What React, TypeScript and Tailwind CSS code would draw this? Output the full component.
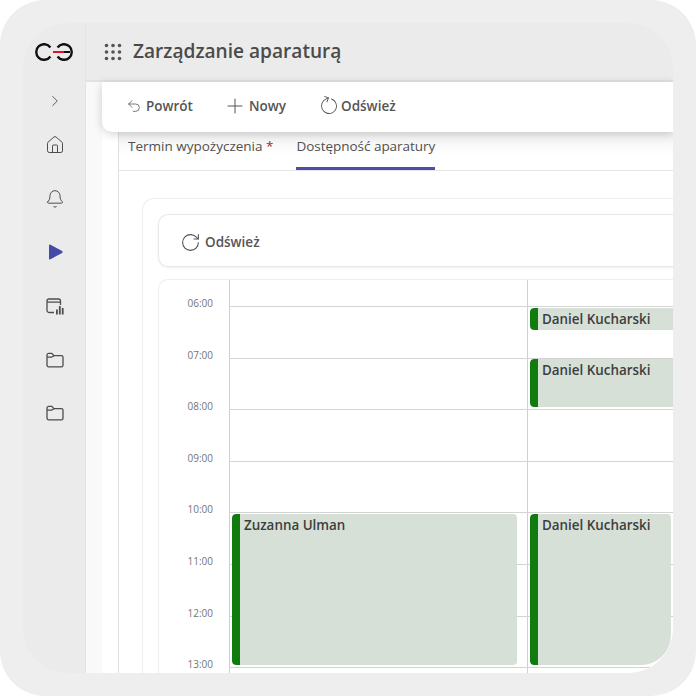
import { Bell, ChevronRight, House, Plus, RotateCcw, RotateCw, Undo2 } from "lucide-react";

const hours = ["06:00", "07:00", "08:00", "09:00", "10:00", "11:00", "12:00", "13:00"];

function Logo() {
  return (
    <svg className="-ml-[2px]" width="38" height="18" viewBox="0 0 38 18" fill="none">
      <path d="M15.4 4.5A7.8 7.8 0 1 0 15.4 13.5" stroke="#111" strokeWidth="2.4" />
      <path d="M22.6 4.5A7.8 7.8 0 1 1 22.6 13.5" stroke="#111" strokeWidth="2.4" />
      <path d="M18 9h11" stroke="#e0102f" strokeWidth="2.2" />
      <path d="M29 9h6" stroke="#111" strokeWidth="2.2" />
    </svg>
  );
}

function Dots() {
  return (
    <svg width="18" height="18" viewBox="0 0 18 18" fill="#555">
      {[2.5, 9, 15.5].map((y) =>
        [2.5, 9, 15.5].map((x) => <circle key={`${x}-${y}`} cx={x} cy={y} r="1.8" />),
      )}
    </svg>
  );
}

function FolderIcon() {
  return (
    <svg width="18" height="16" viewBox="0 0 18 16" fill="none" stroke="#4d4d4d" strokeWidth="1.3">
      <path d="M1 3a1.6 1.6 0 0 1 1.6-1.6h3.2L8 3.6h7.4A1.6 1.6 0 0 1 17 5.2v8a1.6 1.6 0 0 1-1.6 1.6H2.6A1.6 1.6 0 0 1 1 13.2z" />
      <path d="M1 5.2h4.6L8 3.6" />
    </svg>
  );
}

function ReportIcon() {
  return (
    <svg width="18" height="18" viewBox="0 0 18 18" fill="none">
      <path d="M8 14.5H3a2 2 0 0 1-2-2V3a2 2 0 0 1 2-2h9.5a2 2 0 0 1 2 2v4M1 4.2h13.5" stroke="#4d4d4d" strokeWidth="1.3" />
      <path d="M10 11.5h1.8v5H10zM12.9 8h1.8v8.5h-1.8zM15.8 10h1.8v6.5h-1.8z" fill="#4d4d4d" />
    </svg>
  );
}

function ToolbarButton({ icon, label, className }: { icon: React.ReactNode; label: string; className: string }) {
  return (
    <button className={`flex items-center text-[13.5px] font-semibold text-[#555] ${className}`} type="button">
      {icon}
      {label}
    </button>
  );
}

function CalendarEvent({ name, className }: { name: string; className: string }) {
  return (
    <div className={`absolute flex overflow-hidden rounded-[4px] bg-[#d7e0d7] ${className}`}>
      <div className="w-2 shrink-0 rounded-l-[4px] bg-[#107c10]" />
      <span className="pl-[4px] pt-[1px] text-[13.4px] leading-[20px] font-[550] text-[#3d3d3d]">{name}</span>
    </div>
  );
}

export default function App() {
  return (
    <div className="h-[696px] w-[696px] bg-white font-['Open_Sans',sans-serif]">
      <div className="h-full rounded-[45px] bg-[#eeeeee] p-[23px]">
        <div className="flex h-[650px] w-[650px] overflow-hidden rounded-[45px] bg-[#ebebeb]">
          <aside className="flex w-[63px] shrink-0 flex-col items-center border-r border-[#e4e4e4] pl-[1px] pt-[17px]">
            <div className="flex h-[24px] items-center">
              <Logo />
            </div>
            <ChevronRight className="mt-[28px]" size={18} strokeWidth={1.2} color="#4d4d4d" />
            <House className="mt-[25px]" size={20} strokeWidth={1.2} color="#4d4d4d" />
            <Bell className="mt-[34px]" size={20} strokeWidth={1.2} color="#4d4d4d" />
            <svg className="ml-[2px] mt-[35px]" width="15" height="16" viewBox="0 0 15 16" fill="#4549a8">
              <path d="M1 1.6c0-.9.8-1.3 1.5-.9l11.6 6.4c.7.4.7 1.4 0 1.8L2.5 15.3c-.7.4-1.5 0-1.5-.9z" />
            </svg>
            <div className="ml-[1px] mt-[38px]">
              <ReportIcon />
            </div>
            <div className="mt-[36px]">
              <FolderIcon />
            </div>
            <div className="mt-[37px]">
              <FolderIcon />
            </div>
          </aside>

          <main className="flex min-w-0 flex-1 flex-col">
            <header className="flex h-[59px] shrink-0 items-center gap-[11px] border-b-2 border-[#e2e2e2] pl-[18px]">
              <Dots />
              <h1 className="text-[19.1px] font-semibold text-[#4a4a4a]">Zarządzanie aparaturą</h1>
            </header>

            <div className="flex min-h-0 flex-1 bg-[#f9f9f9] pl-[16px]">
              <div className="relative flex min-h-0 flex-1 flex-col bg-white">
                <div className="relative z-10 flex h-[50px] shrink-0 items-center rounded-bl-[10px] bg-white pb-[2px] pl-[24px] shadow-[0_2px_10px_rgba(0,0,0,0.18)]">
                  <ToolbarButton className="gap-[4px]" icon={<Undo2 size={16} strokeWidth={1.2} />} label="Powrót" />
                  <ToolbarButton className="ml-[30px] gap-[2px]" icon={<Plus size={24} strokeWidth={1} />} label="Nowy" />
                  <ToolbarButton className="ml-[33px] gap-[2px]" icon={<RotateCcw className="-scale-x-100 rotate-[-70deg]" size={20} strokeWidth={1.1} />} label="Odśwież" />
                </div>

                <div className="ml-[16px] flex min-h-0 flex-1 flex-col border-l border-[#e0e0e0]">
                  <div className="flex h-[39px] shrink-0 gap-[22px] border-b border-[#e4e4e4] bg-gradient-to-b from-[#f0f0f0] to-white to-60% pl-[9px] text-[13.5px] text-[#505050]">
                    <span className="pt-[4px]">
                      Termin wypożyczenia <span className="text-[#a4262c]">*</span>
                    </span>
                    <span className="ml-[1px] h-[38px] border-b-[3px] border-[#4b4fa8] pt-[4px] tracking-[-0.03px]">Dostępność aparatury</span>
                  </div>

                  <div className="ml-[23px] mt-[27px] flex min-h-0 flex-1 flex-col rounded-tl-[12px] border-t border-l border-[#eeeeee] pl-[15px] pt-[15px]">
                    <div className="flex h-[53px] shrink-0 items-center gap-[4px] rounded-l-[10px] border-y border-l border-[#e8e8e8] pl-[21px] pt-[3px] shadow-[0_1px_2px_rgba(0,0,0,0.08)]">
                      <RotateCw size={21} strokeWidth={1.2} color="#505050" />
                      <span className="text-[13.5px] font-semibold text-[#555]">Odśwież</span>
                    </div>

                    <div className="mt-[12px] flex min-h-0 flex-1 rounded-tl-[10px] border-t border-l border-[#eeeeee]">
                      <div className="w-[70px] shrink-0 pr-[16px] pt-[16px] text-right text-[10px] leading-[14px] text-[#757575]">
                        {hours.map((hour) => (
                          <div key={hour} className="h-[51.6px]">
                            {hour}
                          </div>
                        ))}
                      </div>
                      <div className="relative grid flex-1 grid-cols-[298px_1fr] border-l border-[#d0d0d0]">
                        <div className="border-r border-[#d0d0d0]" />
                        <div />
                        <div className="absolute inset-x-0 top-[26px]">
                          {hours.map((hour) => (
                            <div key={hour} className="h-[51.6px] border-t border-[#d4d4d4]" />
                          ))}
                        </div>
                        <CalendarEvent name="Zuzanna Ulman" className="left-[2px] top-[234px] h-[151px] w-[285px]" />
                        <CalendarEvent name="Daniel Kucharski" className="left-[300px] top-[28px] h-[22px] w-[146px]" />
                        <CalendarEvent name="Daniel Kucharski" className="left-[300px] top-[79px] h-[48px] w-[146px]" />
                        <CalendarEvent name="Daniel Kucharski" className="left-[300px] top-[234px] h-[151px] w-[141px] rounded-br-[30px]" />
                      </div>
                    </div>
                  </div>
                </div>
              </div>
            </div>
          </main>
        </div>
      </div>
    </div>
  );
}
